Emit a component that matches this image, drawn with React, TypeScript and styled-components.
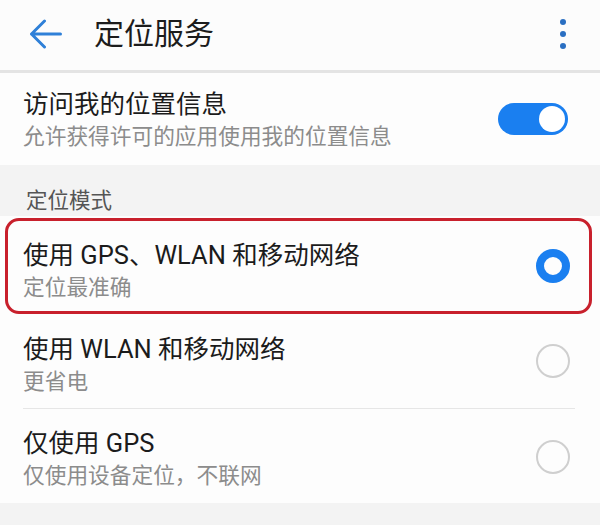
import React from "react";
import styled, { createGlobalStyle } from "styled-components";

const Global = createGlobalStyle`
  html, body { margin: 0; padding: 0; background: #f3f3f3; }
  body { font-family: Roboto, "Noto Sans CJK SC", "Noto Sans", sans-serif; }
  * { box-sizing: border-box; }
`;

const Page = styled.div`
  width: 600px;
  height: 525px;
  overflow: hidden;
  background: #f3f3f3;
  display: flex;
  flex-direction: column;
`;

const Header = styled.header`
  height: 73px;
  flex: none;
  background: #fcfcfc;
  border-bottom: 3px solid #e4e4e4;
  display: flex;
  align-items: center;
  padding: 0 34px 0 29px;
`;

const BackButton = styled.div`
  width: 34px;
  height: 30px;
  display: flex;
  align-items: center;
  margin-top: -2px;
`;

const Title = styled.h1`
  margin: -2px 0 0 31px;
  flex: 1;
  font-size: 30px;
  font-weight: 400;
  color: #1c1c1c;
  line-height: 36px;
`;

const MoreButton = styled.div`
  display: flex;
  flex-direction: column;
  gap: 6px;
  margin-top: -2px;
`;

const Dot = styled.span`
  width: 6px;
  height: 6px;
  border-radius: 50%;
  background: #2a6fc2;
`;

const Card = styled.section`
  background: #fdfdfd;
  display: flex;
  flex-direction: column;
  flex: none;
`;

const Row = styled.div<{ $h: number }>`
  position: relative;
  height: ${(p) => p.$h}px;
  display: flex;
  align-items: center;
  padding: 0 30px 0 23px;
`;

const Texts = styled.div<{ $shift: number }>`
  flex: 1;
  display: flex;
  flex-direction: column;
  padding-top: ${(p) => p.$shift * 2}px;
`;

const RowTitle = styled.div`
  font-size: 25.5px;
  line-height: 32px;
  color: #1b1b1b;
  margin-top: -6px;
`;

const RowSub = styled.div`
  font-size: 21.7px;
  line-height: 32px;
  color: #8c8c8c;
  margin-top: 1px;
`;

const Divider = styled.div`
  height: 1px;
  background: #e6e6e6;
  margin: 0 25px 0 23px;
`;

const SectionHead = styled.div`
  height: 51px;
  flex: none;
  padding: 22px 0 0 26px;
  font-size: 21.5px;
  line-height: 28px;
  color: #555;
`;

const Switch = styled.div`
  width: 70px;
  height: 32px;
  border-radius: 16px;
  background: #1a7ff0;
  display: flex;
  align-items: center;
  justify-content: flex-end;
  padding-right: 3px;
  margin-right: 2px;
`;

const Knob = styled.span`
  width: 26px;
  height: 26px;
  border-radius: 50%;
  background: #ffffff;
`;

const Radio = styled.div<{ $on?: boolean }>`
  width: 34px;
  height: 34px;
  border-radius: 50%;
  flex: none;
  border: ${(p) => (p.$on ? "8.5px solid #1a7ff0" : "2px solid #cfcfcf")};
  background: #fdfdfd;
  margin-top: ${(p) => (p.$on ? 4 : 2)}px;
`;

const Highlight = styled.div`
  position: absolute;
  top: 2px;
  left: 5px;
  right: 8px;
  bottom: -2px;
  border: 3px solid #c8202c;
  border-radius: 14px;
  pointer-events: none;
`;

const options = [
  { title: "使用 GPS、WLAN 和移动网络", sub: "定位最准确", on: true, h: 96, shift: 10 },
  { title: "使用 WLAN 和移动网络", sub: "更省电", on: false, h: 96, shift: 8 },
  { title: "仅使用 GPS", sub: "仅使用设备定位，不联网", on: false, h: 94, shift: 6 },
];

export default function App() {
  return (
    <Page>
      <Global />
      <Header>
        <BackButton>
          <svg width="34" height="30" viewBox="0 0 34 30" fill="none">
            <path
              d="M2.5 15 H31.5 M15.5 2 L2.5 15 L15.5 28"
              stroke="#2f80d8"
              strokeWidth="3"
              strokeLinecap="round"
              strokeLinejoin="round"
            />
          </svg>
        </BackButton>
        <Title>定位服务</Title>
        <MoreButton>
          <Dot />
          <Dot />
          <Dot />
        </MoreButton>
      </Header>
      <Card>
        <Row $h={92}>
          <Texts $shift={4}>
            <RowTitle>访问我的位置信息</RowTitle>
            <RowSub>允许获得许可的应用使用我的位置信息</RowSub>
          </Texts>
          <Switch>
            <Knob />
          </Switch>
        </Row>
      </Card>
      <SectionHead>定位模式</SectionHead>
      <Card>
        {options.map((o, i) => (
          <React.Fragment key={o.title}>
            {i === 2 && <Divider />}
            <Row $h={o.h}>
              <Texts $shift={o.shift}>
                <RowTitle>{o.title}</RowTitle>
                <RowSub>{o.sub}</RowSub>
              </Texts>
              <Radio $on={o.on} />
              {o.on && <Highlight />}
            </Row>
          </React.Fragment>
        ))}
      </Card>
    </Page>
  );
}
